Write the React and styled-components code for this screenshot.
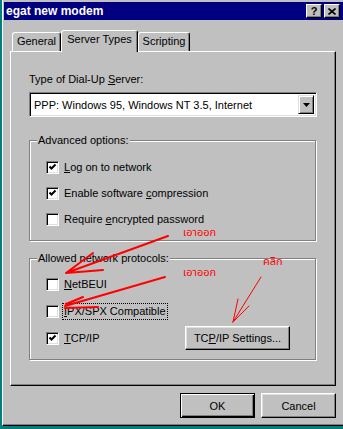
import React from 'react'
import styled, { createGlobalStyle } from 'styled-components'

const GlobalStyle = createGlobalStyle`
  html, body {
    margin: 0;
    padding: 0;
    background: #008080;
    overflow: hidden;
  }
  body {
    font-family: "Liberation Sans", Arial, sans-serif;
    font-size: 11px;
    color: #000;
  }
`

const Screen = styled.div`
  position: relative;
  width: 343px;
  height: 429px;
  overflow: hidden;
`

const Window = styled.div`
  margin-left: 2px;
  width: 345px;
  height: 426px;
  box-sizing: border-box;
  padding: 2px 0 0 1px;
  background: #c0c0c0;
  border-left: 1px solid #fff;
  border-bottom: 1px solid #000;
  box-shadow: inset 0 -1px 0 #808080;
  display: flex;
  flex-direction: column;
`

const TitleBar = styled.div`
  height: 18px;
  background: #000080;
  display: flex;
  align-items: center;
  justify-content: space-between;
  padding: 0 7px 0 2px;
`

const Title = styled.span`
  color: #fff;
  font-weight: bold;
  font-size: 12px;
`

const CaptionButtons = styled.div`
  display: flex;
  gap: 2px;
`

const CaptionButton = styled.div`
  width: 16px;
  height: 14px;
  box-sizing: border-box;
  background: #c0c0c0;
  border: 1px solid;
  border-color: #fff #000 #000 #fff;
  box-shadow: inset -1px -1px 0 #808080;
  display: flex;
  align-items: center;
  justify-content: center;
  font-weight: bold;
  font-size: 11px;
  line-height: 1;
`

const TabStrip = styled.div`
  display: flex;
  align-items: flex-end;
  height: 21px;
  margin: 10px 0 0 8px;
`

const Tab = styled.div`
  box-sizing: border-box;
  width: ${p => p.$w}px;
  height: ${p => (p.$active ? 22 : 19)}px;
  margin-bottom: ${p => (p.$active ? -1 : 0)}px;
  position: relative;
  z-index: ${p => (p.$active ? 1 : 0)};
  background: #c0c0c0;
  border: 1px solid;
  border-bottom: none;
  border-color: #fff #000 transparent #fff;
  border-radius: 3px 3px 0 0;
  box-shadow: inset -1px 0 0 #808080;
  padding-top: 2px;
  text-align: center;
  line-height: 13px;
`

const Panel = styled.div`
  margin-left: 6px;
  width: 326px;
  height: 335px;
  box-sizing: border-box;
  border: 1px solid;
  border-color: #fff #000 #000 #fff;
  box-shadow: inset -1px -1px 0 #808080;
  padding: 21px 0 0 18px;
`

const FieldLabel = styled.div`
  line-height: 13px;
`

const Combo = styled.div`
  margin-top: 6px;
  width: 288px;
  height: 25px;
  box-sizing: border-box;
  background: #fff;
  border: 1px solid;
  border-color: #808080 #fff #fff #808080;
  box-shadow: inset 1px 1px 0 #000, inset -1px -1px 0 #dfdfdf;
  padding: 2px;
  display: flex;
  align-items: stretch;
`

const ComboText = styled.div`
  flex: 1;
  display: flex;
  align-items: center;
  padding-left: 2px;
`

const DropButton = styled.div`
  width: 16px;
  box-sizing: border-box;
  background: #c0c0c0;
  border: 1px solid;
  border-color: #dfdfdf #000 #000 #dfdfdf;
  box-shadow: inset 1px 1px 0 #fff, inset -1px -1px 0 #808080;
  display: flex;
  align-items: center;
  justify-content: center;
`

const Group = styled.div`
  position: relative;
  width: 287px;
  box-sizing: border-box;
  margin-top: ${p => p.$top}px;
  border: 1px solid #808080;
  box-shadow: inset 1px 1px 0 #fff, 1px 1px 0 #fff;
  padding: ${p => p.$pad};
  display: flex;
  flex-direction: column;
  gap: ${p => p.$gap}px;
`

const Legend = styled.span`
  position: absolute;
  top: -7px;
  left: 7px;
  padding: 0 1px;
  background: #c0c0c0;
  line-height: 13px;
`

const Row = styled.div`
  display: flex;
  align-items: center;
  margin-top: ${p => p.$top || 0}px;
`

const Box = styled.div`
  width: 13px;
  height: 13px;
  box-sizing: border-box;
  background: #fff;
  border: 1px solid;
  border-color: #808080 #fff #fff #808080;
  box-shadow: inset 1px 1px 0 #000, inset -1px -1px 0 #dfdfdf;
  display: flex;
  align-items: center;
  justify-content: center;
  flex-shrink: 0;
`

const CheckLabel = styled.span`
  margin-left: 3px;
  padding: 1px;
  line-height: 13px;
  border: 1px dotted ${p => (p.$focus ? '#000' : 'transparent')};
`

const Button = styled.div`
  width: ${p => p.$w}px;
  height: ${p => p.$h}px;
  box-sizing: border-box;
  background: #c0c0c0;
  border: 1px solid;
  border-color: ${p => (p.$default ? '#000' : '#fff #000 #000 #fff')};
  box-shadow: ${p =>
    p.$default
      ? 'inset 1px 1px 0 #fff, inset -1px -1px 0 #000, inset -2px -2px 0 #808080'
      : 'inset -1px -1px 0 #808080, inset 1px 1px 0 #dfdfdf'};
  display: flex;
  align-items: center;
  justify-content: center;
  margin-left: ${p => (p.$push ? 'auto' : '0')};
`

const ButtonRow = styled.div`
  width: 326px;
  margin: 7px 0 0 6px;
  display: flex;
  justify-content: flex-end;
  gap: 6px;
`

const Overlay = styled.svg`
  position: absolute;
  top: 0;
  left: 0;
  pointer-events: none;
`

const Note = styled.span`
  position: absolute;
  top: ${p => p.$y}px;
  left: ${p => p.$x}px;
  color: #ff0000;
  font-family: "Noto Sans Thai", "Noto Sans", "DejaVu Sans", sans-serif;
  font-size: 11px;
  line-height: 13px;
  pointer-events: none;
`

function Check() {
  return (
    <svg width="9" height="9" viewBox="0 0 9 9">
      <path d="M1.5 3.5 L3.5 5.5 L7.5 1.5" fill="none" stroke="#000" strokeWidth="2" />
    </svg>
  )
}

function CheckRow({ checked, focus, top, children }) {
  return (
    <Row $top={top}>
      <Box>{checked && <Check />}</Box>
      <CheckLabel $focus={focus}>{children}</CheckLabel>
    </Row>
  )
}

export default function App() {
  return (
    <Screen>
      <GlobalStyle />
      <Window>
        <TitleBar>
          <Title>egat new modem</Title>
          <CaptionButtons>
            <CaptionButton>?</CaptionButton>
            <CaptionButton>
              <svg width="8" height="7" viewBox="0 0 8 7">
                <path d="M0.5 0.5 L7.5 6.5 M7.5 0.5 L0.5 6.5" stroke="#000" strokeWidth="1.6" />
              </svg>
            </CaptionButton>
          </CaptionButtons>
        </TitleBar>

        <TabStrip>
          <Tab $w={49}>General</Tab>
          <Tab $w={77} $active>Server Types</Tab>
          <Tab $w={52}>Scripting</Tab>
        </TabStrip>

        <Panel>
          <FieldLabel>Type of Dial-Up <u>S</u>erver:</FieldLabel>
          <Combo>
            <ComboText>PPP: Windows 95, Windows NT 3.5, Internet</ComboText>
            <DropButton>
              <svg width="7" height="4" viewBox="0 0 7 4">
                <path d="M0 0 H7 L3.5 4 Z" fill="#000" />
              </svg>
            </DropButton>
          </Combo>

          <Group $top={23} $pad="18px 0 12px 16px" $gap={9}>
            <Legend>Advanced options:</Legend>
            <CheckRow checked><u>L</u>og on to network</CheckRow>
            <CheckRow checked>Enable software <u>c</u>ompression</CheckRow>
            <CheckRow>Require <u>e</u>ncrypted password</CheckRow>
          </Group>

          <Group $top={17} $pad="17px 25px 9px 16px" $gap={0}>
            <Legend>Allowed network protocols:</Legend>
            <CheckRow><u>N</u>etBEUI</CheckRow>
            <CheckRow top={10} focus><u>I</u>PX/SPX Compatible</CheckRow>
            <Row $top={6}>
              <Box><Check /></Box>
              <CheckLabel><u>T</u>CP/IP</CheckLabel>
              <Button $w={105} $h={24} $push>TC<u>P</u>/IP Settings...</Button>
            </Row>
          </Group>
        </Panel>

        <ButtonRow>
          <Button $w={75} $h={25} $default>OK</Button>
          <Button $w={75} $h={25}>Cancel</Button>
        </ButtonRow>
      </Window>

      <Overlay width="343" height="429" viewBox="0 0 343 429">
        <g stroke="#ff0000" strokeLinecap="round" fill="none">
          <path d="M168 236 L66 273 M66 273 L93 253 M66 273 L103 270" strokeWidth="2" />
          <path d="M165 277 L65 306 M66 304 L83 297 M65 308 L98 307" strokeWidth="2" />
          <path d="M261 277 L233 322 M233 322 L238 299 M233 322 L249 306" strokeWidth="1" />
        </g>
      </Overlay>
      <Note $x={183} $y={226}>เอาออก</Note>
      <Note $x={183} $y={266}>เอาออก</Note>
      <Note $x={263} $y={255}>คลิก</Note>
    </Screen>
  )
}
